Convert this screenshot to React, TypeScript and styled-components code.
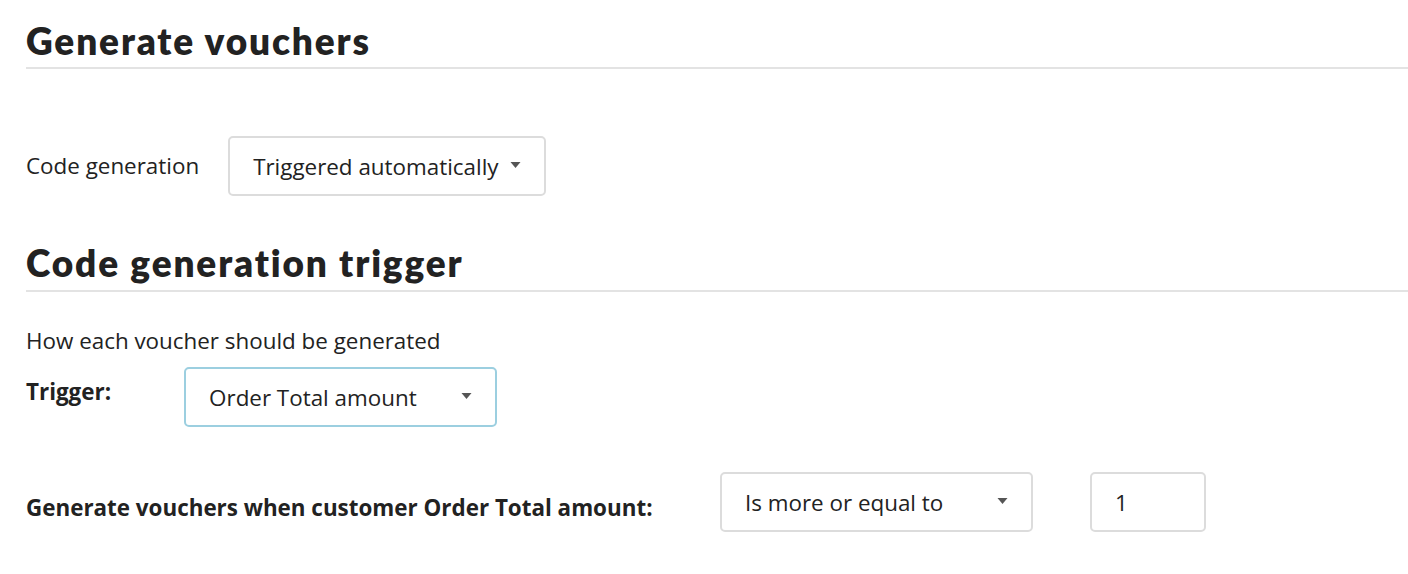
import styled, { createGlobalStyle } from 'styled-components';

const COLORS = {
  TEXT: '#222222',
  LINE: '#e3e3e3',
  BORDER: '#dcdcdc',
  FOCUS: '#9ccfe0',
  CARET: '#555555'
};

const GlobalStyle = createGlobalStyle`
  * {
    box-sizing: border-box;
  }
  body {
    margin: 0;
    background: #ffffff;
    color: ${COLORS.TEXT};
    font-family: 'Open Sans', 'Liberation Sans', sans-serif;
  }
`;

type SelectProps = {
  value: string;
  width?: number;
  focused?: boolean;
};

function Select({ value, width, focused }: SelectProps) {
  return (
    <SelectBox $width={width} $focused={focused}>
      <span>{value}</span>
      <Caret viewBox="0 0 10 6" aria-hidden="true">
        <path d="M0 0 L10 0 L5 6 Z" fill={COLORS.CARET} />
      </Caret>
    </SelectBox>
  );
}

function App() {
  return (
    <Page>
      <GlobalStyle />
      <Heading>Generate vouchers</Heading>
      <GenerationRow>
        <Label>Code generation</Label>
        <Select value="Triggered automatically" />
      </GenerationRow>

      <TriggerHeading>Code generation trigger</TriggerHeading>
      <Description>How each voucher should be generated</Description>
      <TriggerRow>
        <BoldLabel $offset={10}>Trigger:</BoldLabel>
        <Select value="Order Total amount" width={313} focused />
      </TriggerRow>

      <ConditionRow>
        <ConditionLabel $offset={21}>
          Generate vouchers when customer Order Total amount:
        </ConditionLabel>
        <Select value="Is more or equal to" width={313} />
        <AmountInput>1</AmountInput>
      </ConditionRow>
    </Page>
  );
}

const Page = styled.div`
  display: flex;
  flex-direction: column;
  padding: 19px 0 0 26px;
  width: 1408px;
  height: 574px;
  overflow: hidden;
`;

const Heading = styled.h1`
  margin: 0;
  font-family: Lato, 'Open Sans', sans-serif;
  font-weight: 800;
  font-size: 37px;
  line-height: 44px;
  padding-bottom: 4px;
  border-bottom: 2px solid ${COLORS.LINE};
  letter-spacing: 1.85px;
`;

const TriggerHeading = styled(Heading)`
  padding-bottom: 5px;
`;

const Label = styled.span`
  font-size: 22.4px;
  line-height: 30px;
`;

const BoldLabel = styled(Label)<{ $offset?: number }>`
  font-weight: 700;
  padding-top: ${({ $offset }) => $offset ?? 0}px;
`;

const ConditionLabel = styled(BoldLabel)`
  width: 694px;
  flex-shrink: 0;
`;

const Row = styled.div`
  display: flex;
  align-items: center;
`;

const GenerationRow = styled(Row)`
  gap: 29px;
  margin: 67px 0 45px;
`;

const Description = styled.p`
  margin: 34px 0 0;
  font-size: 22.4px;
  line-height: 30px;
`;

const TriggerRow = styled(Row)`
  align-items: flex-start;
  gap: 73px;
  margin-top: 11px;
`;

const ConditionRow = styled(Row)`
  align-items: flex-start;
  margin-top: 45px;
`;

const SelectBox = styled.div<{ $width?: number; $focused?: boolean }>`
  display: flex;
  align-items: center;
  justify-content: space-between;
  gap: 11px;
  width: ${({ $width }) => ($width ? `${$width}px` : 'auto')};
  height: 60px;
  padding: 0 23px;
  border: 2px solid ${({ $focused }) => ($focused ? COLORS.FOCUS : COLORS.BORDER)};
  border-radius: 5px;
  background: #ffffff;
  font-size: 22.4px;
  color: ${COLORS.TEXT};
`;

const Caret = styled.svg`
  width: 11px;
  height: 6px;
  flex-shrink: 0;
  margin-top: -3px;
`;

const AmountInput = styled.div`
  display: flex;
  align-items: center;
  width: 116px;
  height: 60px;
  margin-left: 57px;
  padding: 0 23px;
  border: 2px solid ${COLORS.BORDER};
  border-radius: 5px;
  font-size: 22.4px;
`;

export default App;
